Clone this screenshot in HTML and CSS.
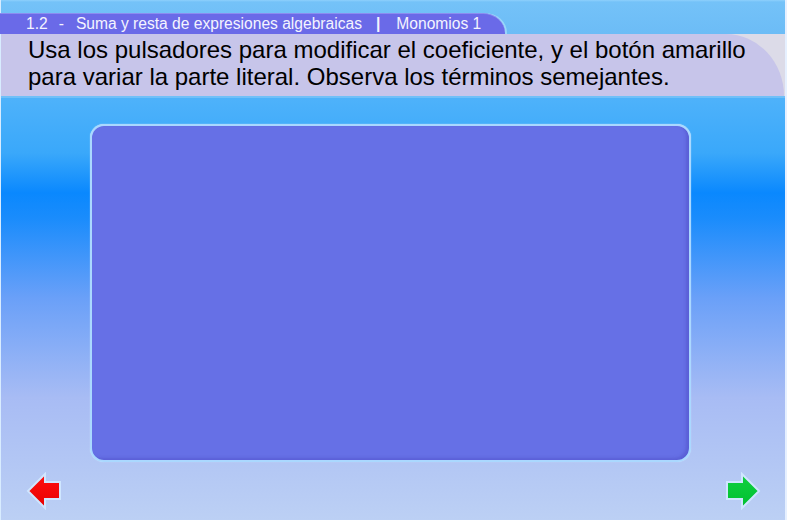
FILE: index.html
```html
<!DOCTYPE html>
<html>
<head>
<meta charset="utf-8">
<link rel="stylesheet" href="styles.css">
</head>
<body>
<div class="app">
  <header class="top">
    <div class="topbar">
      <div class="tab">
        <span class="num">1.2</span><span class="dash">-</span><span class="title">Suma y resta de expresiones algebraicas</span><span class="sep">|</span><span class="sub">Monomios 1</span>
      </div>
    </div>
    <div class="instr-wrap">
      <div class="instr">
        <p>Usa los pulsadores para modificar el coeficiente, y el botón amarillo<br>para variar la parte literal. Observa los términos semejantes.</p>
      </div>
    </div>
  </header>
  <main class="stage">
    <div class="panel"></div>
    <div class="nav">
      <svg class="arrow" width="36" height="38" viewBox="0 0 36 38">
        <defs>
          <linearGradient id="rg" x1="0" y1="0" x2="0" y2="1">
            <stop offset="0" stop-color="#ff1010"/>
            <stop offset="1" stop-color="#e80000"/>
          </linearGradient>
        </defs>
        <polygon points="2,19 19,2 19,10 34,10 34,27 19,27 19,36" fill="url(#rg)" stroke="#cfe6ff" stroke-width="2" stroke-linejoin="miter"/>
      </svg>
      <svg class="arrow" width="36" height="38" viewBox="0 0 36 38">
        <defs>
          <linearGradient id="gg" x1="0" y1="0" x2="0" y2="1">
            <stop offset="0" stop-color="#10d040"/>
            <stop offset="1" stop-color="#00c030"/>
          </linearGradient>
        </defs>
        <polygon points="34,19 17,2 17,10 2,10 2,27 17,27 17,36" fill="url(#gg)" stroke="#cfe6ff" stroke-width="2" stroke-linejoin="miter"/>
      </svg>
    </div>
  </main>
</div>
</body>
</html>
```

FILE: styles.css
```css
html, body {
  margin: 0;
  padding: 0;
}
body {
  width: 787px;
  height: 520px;
  overflow: hidden;
  font-family: "Liberation Sans", Arial, sans-serif;
}
.app {
  width: 787px;
  height: 520px;
  display: flex;
  flex-direction: column;
  box-sizing: border-box;
  border-left: 1px solid #d8ecff;
  border-right: 2px solid #e6f0ff;
  background: #bcd0f4;
}
.top {
  display: flex;
  flex-direction: column;
}
.topbar {
  height: 34px;
  background: linear-gradient(#8ed0fc 0, #74c2f8 2px, #6cbcf6 100%);
  display: flex;
  align-items: flex-end;
}
.tab {
  height: 21px;
  width: 505px;
  margin-left: -1px;
  background: #6a6ae8;
  border-top: 1px solid #8c8cf0;
  border-top-right-radius: 22px 20px;
  box-sizing: border-box;
  color: #f4f4ff;
  font-size: 15.6px;
  line-height: 20px;
  padding-left: 26px;
  white-space: nowrap;
  box-shadow: 2px 0 0 #9ad6fa;
}
.tab .dash { margin-left: 11px; }
.tab .title { margin-left: 12px; }
.tab .sep { margin-left: 14px; font-weight: bold; }
.tab .sub { margin-left: 16px; }
.instr-wrap {
  background: #dcdbe8;
  border-bottom: 2px solid #70c0f8;
  display: flex;
}
.instr {
  width: 783px;
  height: 62px;
  background: #c7c5ea;
  border-top-right-radius: 58px 62px;
  display: flex;
}
.instr p {
  margin: 0;
  padding: 2px 0 0 27px;
  font-size: 24px;
  line-height: 27px;
  color: #000;
  white-space: nowrap;
}
.stage {
  flex: 1;
  display: flex;
  flex-direction: column;
  background: linear-gradient(#4eb2fa 0, #3aa8fa 55px, #0a88fe 95px, #1a8cfc 120px, #6aa0f8 200px, #a8bcf4 300px, #bcd0f4 422px);
  padding-top: 26px;
}
.panel {
  width: 597px;
  height: 334px;
  margin-left: 89px;
  background: #6670e6;
  border: 2px solid #aad8ff;
  border-radius: 14px;
  box-shadow: inset -3px -2px 3px rgba(80, 80, 200, 0.5), 0 0 1px #d0ecff;
}
.nav {
  display: flex;
  justify-content: space-between;
  padding: 10px 24px 0 25px;
}
.arrow {
  display: block;
}
```
